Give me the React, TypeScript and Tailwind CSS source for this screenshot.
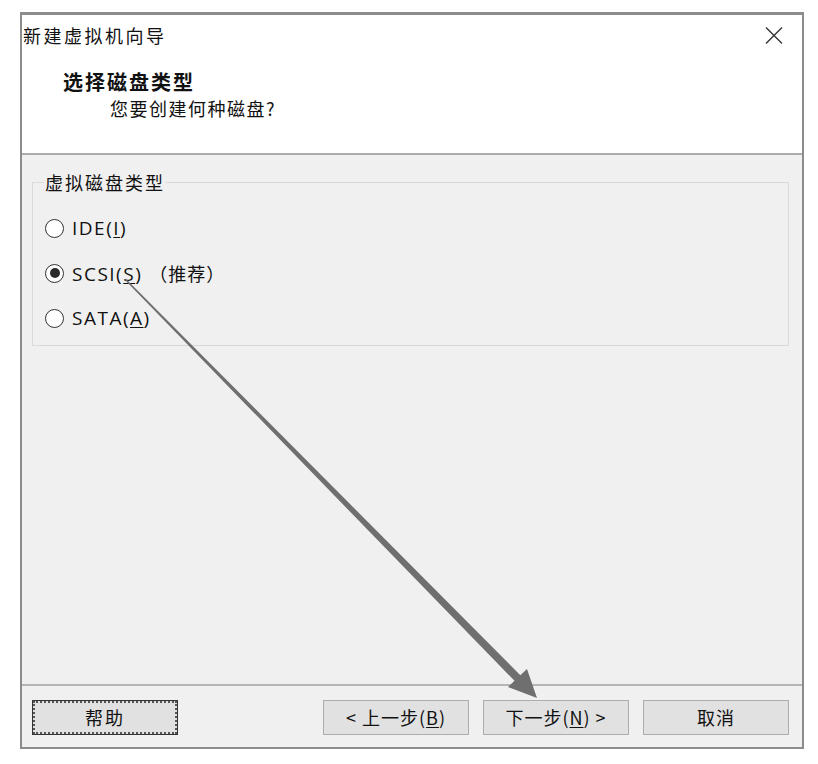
import React from "react";

const cjk = { fontFamily: '"Noto Sans CJK SC", "Noto Sans", sans-serif' };
const latin = { fontFamily: '"Open Sans", "Noto Sans CJK SC", sans-serif' };

function Radio({ checked, children }: { checked?: boolean; children: React.ReactNode }) {
  return (
    <div className="flex items-center h-[24px]">
      <span className="w-[19px] h-[19px] rounded-full border-[1.5px] border-[#333] bg-white flex items-center justify-center shrink-0">
        {checked && <span className="w-[10px] h-[10px] rounded-full bg-[#2a2a2a]" />}
      </span>
      <span className="ml-[8px] text-[19px] leading-[24px] tracking-[1.5px] text-[#111] whitespace-nowrap" style={latin}>
        {children}
      </span>
    </div>
  );
}

function Btn({ children, focused }: { children: React.ReactNode; focused?: boolean }) {
  if (focused) {
    return (
      <div className="w-[146px] h-[35px] border border-[#333] bg-[#e1e1e1] p-0">
        <div className="w-full h-full border-2 border-dotted border-[#555] flex items-center justify-center text-[18px] tracking-[2px] text-[#111]" style={cjk}>
          {children}
        </div>
      </div>
    );
  }
  return (
    <div className="w-[146px] h-[35px] border border-[#adadad] bg-[#e1e1e1] flex items-center justify-center text-[18px] tracking-[1px] text-[#111] whitespace-nowrap" style={cjk}>
      {children}
    </div>
  );
}

export default function App() {
  return (
    <div className="relative w-[818px] h-[764px] bg-white overflow-hidden">
      <div className="ml-[20px] mt-[12px] w-[784px] h-[737px] border-x-2 border-t-[3px] border-b-2 border-[#8c8c8c] bg-[#f0f0f0] flex flex-col">
        <div className="h-[138px] bg-white flex flex-col">
          <div className="h-[40px] flex items-center justify-between pl-[1px] pr-[19px]">
            <span className="text-[18px] tracking-[2.5px] text-[#111]" style={cjk}>新建虚拟机向导</span>
            <svg width="18" height="17" viewBox="0 0 18 17">
              <path d="M1 0.5 L17 16.5 M17 0.5 L1 16.5" stroke="#333" strokeWidth="1.4" fill="none" />
            </svg>
          </div>
          <div className="mt-[15px] pl-[41px] text-[20px] leading-[24px] font-bold tracking-[2px] text-[#111]" style={cjk}>
            选择磁盘类型
          </div>
          <div className="mt-[2px] pl-[88px] text-[18px] leading-[24px] tracking-[1.5px] text-[#111]" style={cjk}>
            您要创建何种磁盘?
          </div>
        </div>
        <div className="h-[2px] bg-[#ababab]" />
        <div className="flex-1 pl-[10px] pr-[13px]">
          <fieldset className="mt-[15px] border border-[#d9d9d9] pl-[12px] pb-[15px] pt-[22px] flex flex-col gap-[21px]">
            <legend className="-ml-[1px] px-[1px] text-[18px] leading-[24px] tracking-[2px] text-[#111]" style={cjk}>
              虚拟磁盘类型
            </legend>
            <Radio>
              IDE(<u className="underline-offset-2">I</u>)
            </Radio>
            <Radio checked>
              SCSI(<u className="underline-offset-2">S</u>)
              <span className="ml-[7px] text-[18px] tracking-[1px]" style={cjk}>（推荐）</span>
            </Radio>
            <Radio>
              SATA(<u className="underline-offset-2">A</u>)
            </Radio>
          </fieldset>
        </div>
        <div className="h-[2px] bg-[#b5b5b5]" />
        <div className="h-[61px] flex items-start pt-[14px] pl-[10px] pr-[13px]">
          <Btn focused>帮助</Btn>
          <div className="flex-1" />
          <div className="flex gap-[14px]">
            <Btn>
              &lt; 上一步(<u className="underline-offset-2">B</u>)
            </Btn>
            <Btn>
              下一步(<u className="underline-offset-2">N</u>) &gt;
            </Btn>
            <Btn>取消</Btn>
          </div>
        </div>
      </div>
      <svg className="absolute inset-0 pointer-events-none" width="818" height="764" viewBox="0 0 818 764">
        <polygon
          points="126.6,279.4 520.3,675.2 527,669 537,698 508,687 514.5,680.8 125.4,280.6"
          fill="#6f6f6f"
        />
      </svg>
    </div>
  );
}
